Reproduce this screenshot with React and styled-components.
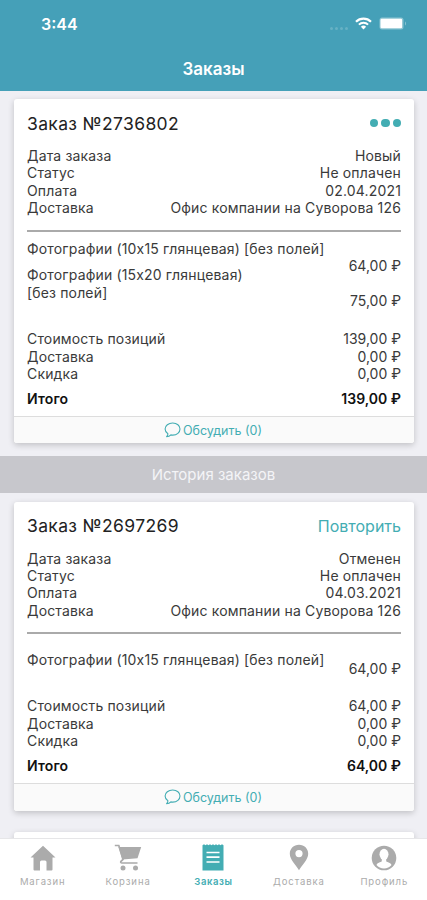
import React from "react";
import styled, { createGlobalStyle } from "styled-components";

const TEAL = "#45a0b8";
const ACCENT = "#43adb3";

const orders = [
    {
        id: "2736802",
        info: [
            ["Дата заказа", "Новый"],
            ["Статус", "Не оплачен"],
            ["Оплата", "02.04.2021"],
            ["Доставка", "Офис компании на Суворова 126"],
        ],
        itemsTop: 8,
        items: [
            { name: "Фотографии (10х15 глянцевая) [без полей]", price: "64,00 ₽", height: 26.5, drop: 17.5 },
            { name: "Фотографии (15х20 глянцевая) [без полей]", price: "75,00 ₽", height: 64, drop: 26, narrow: true },
        ],
        costs: [
            ["Стоимость позиций", "139,00 ₽"],
            ["Доставка", "0,00 ₽"],
            ["Скидка", "0,00 ₽"],
        ],
        total: "139,00 ₽",
    },
    {
        id: "2697269",
        repeat: true,
        info: [
            ["Дата заказа", "Отменен"],
            ["Статус", "Не оплачен"],
            ["Оплата", "04.03.2021"],
            ["Доставка", "Офис компании на Суворова 126"],
        ],
        itemsTop: 17,
        items: [
            { name: "Фотографии (10х15 глянцевая) [без полей]", price: "64,00 ₽", height: 46, drop: 8.5 },
        ],
        costs: [
            ["Стоимость позиций", "64,00 ₽"],
            ["Доставка", "0,00 ₽"],
            ["Скидка", "0,00 ₽"],
        ],
        total: "64,00 ₽",
    },
];

const WifiIcon = () => (
    <svg width="17" height="13" viewBox="0 0 17 13" fill="none" stroke="#fff">
        <path d="M1 4.7a10.6 10.6 0 0 1 15 0" strokeWidth="2.2" />
        <path d="M3.9 7.6a6.5 6.5 0 0 1 9.2 0" strokeWidth="2" />
        <path d="M8.5 12.6 5.9 9.8a3.8 3.8 0 0 1 5.2 0z" fill="#fff" stroke="none" />
    </svg>
);

const BatteryIcon = () => (
    <svg width="28" height="13" viewBox="0 0 28 13">
        <rect x="0.5" y="0.5" width="24" height="12" rx="2.5" fill="#8bc4d2" />
        <rect x="1.5" y="1.7" width="21.6" height="9.6" rx="1.2" fill="#fff" />
        <path d="M26 4.5c1.3.5 1.3 3.5 0 4z" fill="#8bc4d2" />
    </svg>
);

const ChatIcon = () => (
    <svg width="17" height="16" viewBox="0 0 17 16" fill="none" stroke={ACCENT} strokeWidth="1.1" strokeLinejoin="round">
        <path d="M8.7 1C4.5 1 1.1 3.6 1.1 7c0 2 1.1 3.6 2.8 4.7.1 1.2-.4 2.2-1.3 3 1.9 0 3.3-.7 4.3-1.8.6.1 1.2.2 1.8.2 4.2 0 7.3-2.7 7.3-6.1S12.9 1 8.7 1z" />
    </svg>
);

const HomeIcon = () => (
    <svg width="26" height="26" viewBox="0 0 26 26" fill="currentColor">
        <path d="M13 .8 25.5 12.5H22.5V24.5q0 1-1 1H16.5V17q0-1.5-1.5-1.5H11.5Q10 15.5 10 17V25.5H4.5q-1 0-1-1V12.5H.5z" />
    </svg>
);

const CartIcon = () => (
    <svg width="28" height="27" viewBox="0 0 28 27">
        <path d="M4.5 3H27.2L23.5 14.2 8.5 15.5z" fill="currentColor" />
        <path d="M.8 1.5H4.8L9 15.5 6.8 17.5Q6.3 18.8 8 19H23.5" fill="none" stroke="currentColor" strokeWidth="1.7" />
        <circle cx="9" cy="24" r="2.5" fill="currentColor" />
        <circle cx="21.5" cy="24" r="2.5" fill="currentColor" />
    </svg>
);

const OrdersIcon = () => (
    <svg width="22" height="27" viewBox="0 0 22 27">
        <path d="M.5 1.3 2 .3l1.5 1L5 .3l1.5 1L8 .3l1.5 1L11 .3l1.5 1L14 .3l1.5 1L17 .3l1.5 1L20 .3l1.5 1V26.5H.5z" fill="currentColor" />
        <path d="M4.5 8.5h13M4.5 13.2h13M4.5 18h13" stroke="#fff" strokeWidth="1.7" />
    </svg>
);

const PinIcon = () => (
    <svg width="20" height="27" viewBox="0 0 20 27">
        <path fillRule="evenodd" fill="currentColor" d="M10 .8C4.7.8.8 4.7.8 9.7.8 15.5 7 21 10 26.2 13 21 19.2 15.5 19.2 9.7 19.2 4.7 15.3.8 10 .8zM10 6a3.6 3.6 0 1 1 0 7.2A3.6 3.6 0 0 1 10 6z" />
    </svg>
);

const ProfileIcon = () => (
    <svg width="26" height="26" viewBox="0 0 26 26">
        <circle cx="13" cy="13" r="12.3" fill="currentColor" />
        <ellipse cx="13" cy="9.3" rx="4.5" ry="5.5" fill="#fff" />
        <path d="M10.8 13h4.4v3.3c1.3 1.2 4.5 1.3 5.3 3.7-1.8 2.2-4.5 3.5-7.5 3.5S7.3 22.2 5.5 20c.8-2.4 4-2.5 5.3-3.7z" fill="#fff" />
    </svg>
);

const tabs = [
    { label: "Магазин", icon: <HomeIcon /> },
    { label: "Корзина", icon: <CartIcon /> },
    { label: "Заказы", icon: <OrdersIcon />, active: true },
    { label: "Доставка", icon: <PinIcon /> },
    { label: "Профиль", icon: <ProfileIcon /> },
];

const OrderCard = ({ order }) => {
    return (
        <Card>
            <CardBody>
                <CardHead>
                    <OrderTitle>Заказ №{order.id}</OrderTitle>
                    {order.repeat ? <RepeatButton>Повторить</RepeatButton> : <MoreButton><i /><i /><i /></MoreButton>}
                </CardHead>
                {order.info.map(([label, value]) => (
                    <Row key={label}>
                        <span>{label}</span>
                        <span>{value}</span>
                    </Row>
                ))}
                <Divider />
                <Items $top={order.itemsTop}>
                    {order.items.map((item) => (
                        <Item key={item.name} $height={item.height}>
                            <ItemName $narrow={item.narrow}>{item.name}</ItemName>
                            <ItemPrice $drop={item.drop}>{item.price}</ItemPrice>
                        </Item>
                    ))}
                </Items>
                {order.costs.map(([label, value]) => (
                    <Row key={label}>
                        <span>{label}</span>
                        <Price>{value}</Price>
                    </Row>
                ))}
                <TotalRow>
                    <span>Итого</span>
                    <Price>{order.total}</Price>
                </TotalRow>
            </CardBody>
            <Discuss>
                <ChatIcon />
                <span>Обсудить (0)</span>
            </Discuss>
        </Card>
    );
};

const App = () => {
    return (
        <Screen>
            <GlobalStyle />
            <Header>
                <StatusBar>
                    <Clock>3:44</Clock>
                    <StatusIcons>
                        <Signal><i /><i /><i /><i /></Signal>
                        <WifiIcon />
                        <BatteryIcon />
                    </StatusIcons>
                </StatusBar>
                <PageTitle>Заказы</PageTitle>
            </Header>
            <List>
                <OrderCard order={orders[0]} />
                <HistoryTitle>История заказов</HistoryTitle>
                <OrderCard order={orders[1]} />
                <NextCard />
            </List>
            <TabBar>
                {tabs.map((tab) => (
                    <Tab key={tab.label} $active={tab.active}>
                        <TabIcon>{tab.icon}</TabIcon>
                        <span>{tab.label}</span>
                    </Tab>
                ))}
            </TabBar>
        </Screen>
    );
};

const GlobalStyle = createGlobalStyle`
    *{
        box-sizing:border-box;
    }
    body{
        margin:0;
        font-family:Inter, "Liberation Sans", sans-serif;
    }
`
const Screen = styled.div`
    width:427px;
    height:900px;
    display:flex;
    flex-direction:column;
    overflow:hidden;
    background:#efeff4;
    color:#3a3a3a;
`
const Header = styled.header`
    flex:none;
    height:91px;
    background:${TEAL};
    color:#fff;
`
const StatusBar = styled.div`
    height:48px;
    display:flex;
    justify-content:space-between;
    padding:0 20px 0 41px;
`
const Clock = styled.span`
    font-size:16px;
    font-weight:600;
    line-height:48px;
`
const StatusIcons = styled.div`
    height:47px;
    display:flex;
    align-items:center;
    gap:7px;
`
const Signal = styled.span`
    display:flex;
    gap:2px;
    padding-top:9px;
    i{
        width:3px;
        height:3px;
        border-radius:50%;
        background:#67b1c4;
    }
`
const PageTitle = styled.h1`
    margin:0;
    font-size:17px;
    font-weight:600;
    line-height:42px;
    text-align:center;
`
const List = styled.main`
    flex:1;
    min-height:0;
    overflow:hidden;
    padding-top:8px;
`
const Card = styled.section`
    margin:0 13px 0 14px;
    background:#fff;
    border-radius:3px;
    box-shadow:0 2px 6px rgba(0,0,0,0.2);
`
const CardBody = styled.div`
    padding:0 13px 8.2px;
`
const CardHead = styled.div`
    height:48px;
    display:flex;
    align-items:center;
    justify-content:space-between;
`
const OrderTitle = styled.h2`
    margin:0;
    font-size:17.5px;
    font-weight:400;
    letter-spacing:0.35px;
    color:#222;
`
const MoreButton = styled.span`
    display:flex;
    gap:3px;
    i{
        width:8.5px;
        height:8.5px;
        border-radius:50%;
        background:${ACCENT};
    }
`
const RepeatButton = styled.span`
    font-size:16px;
    color:${ACCENT};
`
const Row = styled.div`
    display:flex;
    justify-content:space-between;
    font-size:14px;
    line-height:17.4px;
    letter-spacing:0.16px;
`
const Divider = styled.div`
    height:2px;
    margin-top:13px;
    background:#aaa;
`
const Items = styled.div`
    padding-top:${(p) => p.$top}px;
`
const Item = styled.div`
    display:flex;
    justify-content:space-between;
    height:${(p) => p.$height}px;
    font-size:14px;
    line-height:17.4px;
    letter-spacing:0.16px;
`
const ItemName = styled.span`
    width:${(p) => (p.$narrow ? "230px" : "auto")};
    white-space:${(p) => (p.$narrow ? "normal" : "nowrap")};
`
const Price = styled.span`
    letter-spacing:0;
    white-space:nowrap;
`
const ItemPrice = styled(Price)`
    padding-top:${(p) => p.$drop}px;
`
const TotalRow = styled(Row)`
    margin-top:8px;
    font-weight:600;
    color:#111;
`
const Discuss = styled.div`
    height:27.5px;
    display:flex;
    align-items:center;
    justify-content:center;
    gap:2px;
    padding-right:2px;
    border-top:1px solid #ddd;
    border-radius:0 0 3px 3px;
    background:#fafafa;
    font-size:12.5px;
    color:${ACCENT};
`
const HistoryTitle = styled.div`
    height:37px;
    margin:13px 0 8.2px;
    background:#c7c7cc;
    color:#f4f4f7;
    font-size:15px;
    line-height:37px;
    text-align:center;
`
const NextCard = styled(Card)`
    height:60px;
    margin-top:21px;
`
const TabBar = styled.nav`
    flex:none;
    height:62px;
    display:grid;
    grid-template-columns:repeat(5, 1fr);
    border-top:1px solid #e6e6e8;
    background:#fff;
`
const Tab = styled.div`
    display:flex;
    flex-direction:column;
    align-items:center;
    font-size:9.5px;
    line-height:12px;
    letter-spacing:${(p) => (p.$active ? 0.6 : 0.9)}px;
    font-weight:${(p) => (p.$active ? 600 : 400)};
    color:${(p) => (p.$active ? ACCENT : "#ababab")};
`
const TabIcon = styled.span`
    height:37px;
    display:flex;
    align-items:center;
`
export default App;
